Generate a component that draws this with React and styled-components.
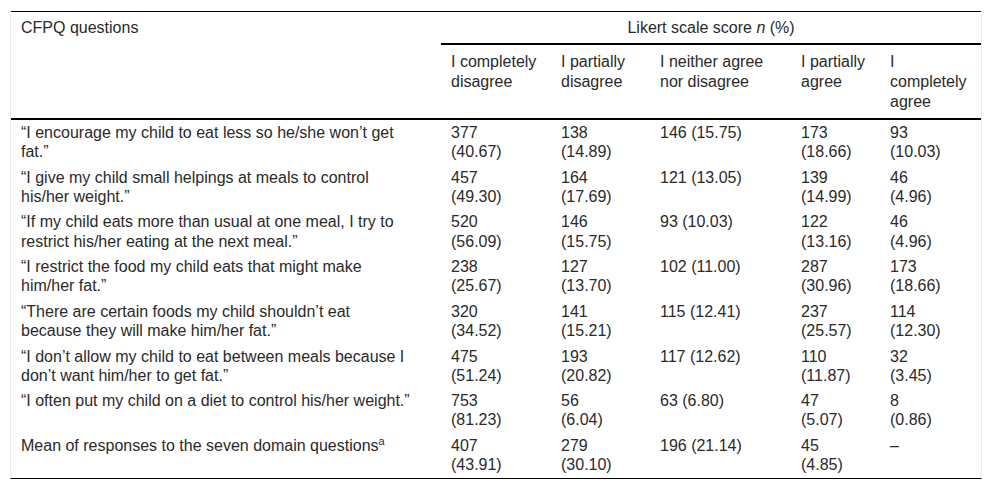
import styled, { createGlobalStyle } from "styled-components";

const GlobalStyle = createGlobalStyle`
  body {
    margin: 0;
    background: #fff;
    font-family: "Liberation Sans", Arial, sans-serif;
    color: #2a2a2a;
  }
`;

const Frame = styled.div`
  margin: 11px 10px 0;
  border-left: 1px solid #ececec;
  border-right: 1px solid #ececec;
  border-bottom: 1px solid #000;
`;

const Table = styled.table`
  width: 100%;
  border-collapse: collapse;
  table-layout: fixed;
  font-size: 16px;
  line-height: 19.2px;
  border-top: 1px solid #000;
`;

const Head = styled.th`
  font-weight: normal;
  text-align: ${(p) => (p.$center ? "center" : "left")};
  vertical-align: top;
  padding: ${(p) => (p.$sub ? "7px 10px 6px" : "6px 10px 5px")};
  line-height: 20px;
  border-bottom: ${(p) => (p.$rule ? "2px solid #000" : "none")};
`;

const Cell = styled.td`
  vertical-align: top;
  padding: 3px 10px 3.3px;

  &:first-child {
    padding-right: 31px;
  }
`;

const Stack = styled.span`
  display: flex;
  flex-direction: column;
`;

const Sup = styled.sup`
  font-size: 11px;
  line-height: 0;
`;

const rows = [
  ["“I encourage my child to eat less so he/she won’t get fat.”", ["377", "(40.67)"], ["138", "(14.89)"], "146 (15.75)", ["173", "(18.66)"], ["93", "(10.03)"]],
  ["“I give my child small helpings at meals to control his/her weight.”", ["457", "(49.30)"], ["164", "(17.69)"], "121 (13.05)", ["139", "(14.99)"], ["46", "(4.96)"]],
  ["“If my child eats more than usual at one meal, I try to restrict his/her eating at the next meal.”", ["520", "(56.09)"], ["146", "(15.75)"], "93 (10.03)", ["122", "(13.16)"], ["46", "(4.96)"]],
  ["“I restrict the food my child eats that might make him/her fat.”", ["238", "(25.67)"], ["127", "(13.70)"], "102 (11.00)", ["287", "(30.96)"], ["173", "(18.66)"]],
  ["“There are certain foods my child shouldn’t eat because they will make him/her fat.”", ["320", "(34.52)"], ["141", "(15.21)"], "115 (12.41)", ["237", "(25.57)"], ["114", "(12.30)"]],
  ["“I don’t allow my child to eat between meals because I don’t want him/her to get fat.”", ["475", "(51.24)"], ["193", "(20.82)"], "117 (12.62)", ["110", "(11.87)"], ["32", "(3.45)"]],
  ["“I often put my child on a diet to control his/her weight.”", ["753", "(81.23)"], ["56", "(6.04)"], "63 (6.80)", ["47", "(5.07)"], ["8", "(0.86)"]],
];

const Value = ({ v }) =>
  Array.isArray(v) ? (
    <Stack>
      <span>{v[0]}</span>
      <span>{v[1]}</span>
    </Stack>
  ) : (
    v
  );

export default function App() {
  return (
    <>
      <GlobalStyle />
      <Frame>
        <Table>
          <colgroup>
            <col style={{ width: 430 }} />
            <col style={{ width: 110 }} />
            <col style={{ width: 99 }} />
            <col style={{ width: 141 }} />
            <col style={{ width: 89 }} />
            <col style={{ width: 101 }} />
          </colgroup>
          <thead>
            <tr>
              <Head rowSpan={2} $rule>
                CFPQ questions
              </Head>
              <Head colSpan={5} $center $rule>
                Likert scale score <i>n</i> (%)
              </Head>
            </tr>
            <tr>
              <Head $sub $rule>I completely disagree</Head>
              <Head $sub $rule>I partially disagree</Head>
              <Head $sub $rule>I neither agree nor disagree</Head>
              <Head $sub $rule>I partially agree</Head>
              <Head $sub $rule>
                I<br />
                completely agree
              </Head>
            </tr>
          </thead>
          <tbody>
            {rows.map((r, i) => (
              <tr key={i}>
                {r.map((v, j) => (
                  <Cell key={j}>
                    <Value v={v} />
                  </Cell>
                ))}
              </tr>
            ))}
            <tr>
              <Cell>
                Mean of responses to the seven domain questions<Sup>a</Sup>
              </Cell>
              <Cell>
                <Value v={["407", "(43.91)"]} />
              </Cell>
              <Cell>
                <Value v={["279", "(30.10)"]} />
              </Cell>
              <Cell>196 (21.14)</Cell>
              <Cell>
                <Value v={["45", "(4.85)"]} />
              </Cell>
              <Cell>–</Cell>
            </tr>
          </tbody>
        </Table>
      </Frame>
    </>
  );
}
